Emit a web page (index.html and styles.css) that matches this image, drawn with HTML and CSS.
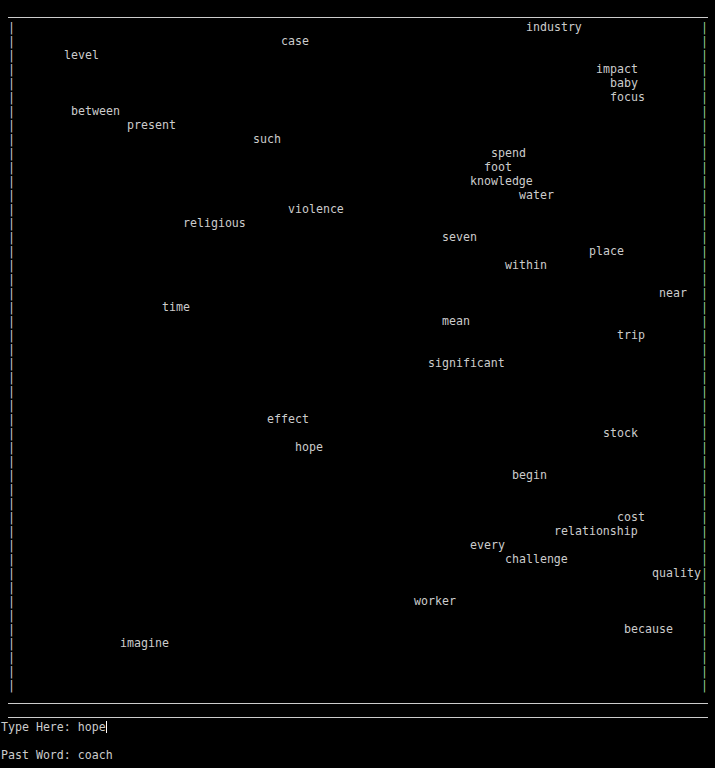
FILE: index.html
```html
<!DOCTYPE html>
<html lang="en">
<head>
<meta charset="utf-8">
<title>Typing game</title>
<link rel="stylesheet" href="styles.css">
</head>
<body>
<div class="screen">
  <div class="rule"></div>
  <div class="field">
    <div class="row"><span class="bar-l">|</span><span class="cell" style="--col:73">industry</span><span class="bar-r">|</span></div>
    <div class="row"><span class="bar-l">|</span><span class="cell" style="--col:38">case</span><span class="bar-r">|</span></div>
    <div class="row"><span class="bar-l">|</span><span class="cell" style="--col:7">level</span><span class="bar-r">|</span></div>
    <div class="row"><span class="bar-l">|</span><span class="cell" style="--col:83">impact</span><span class="bar-r">|</span></div>
    <div class="row"><span class="bar-l">|</span><span class="cell" style="--col:85">baby</span><span class="bar-r">|</span></div>
    <div class="row"><span class="bar-l">|</span><span class="cell" style="--col:85">focus</span><span class="bar-r">|</span></div>
    <div class="row"><span class="bar-l">|</span><span class="cell" style="--col:8">between</span><span class="bar-r">|</span></div>
    <div class="row"><span class="bar-l">|</span><span class="cell" style="--col:16">present</span><span class="bar-r">|</span></div>
    <div class="row"><span class="bar-l">|</span><span class="cell" style="--col:34">such</span><span class="bar-r">|</span></div>
    <div class="row"><span class="bar-l">|</span><span class="cell" style="--col:68">spend</span><span class="bar-r">|</span></div>
    <div class="row"><span class="bar-l">|</span><span class="cell" style="--col:67">foot</span><span class="bar-r">|</span></div>
    <div class="row"><span class="bar-l">|</span><span class="cell" style="--col:65">knowledge</span><span class="bar-r">|</span></div>
    <div class="row"><span class="bar-l">|</span><span class="cell" style="--col:72">water</span><span class="bar-r">|</span></div>
    <div class="row"><span class="bar-l">|</span><span class="cell" style="--col:39">violence</span><span class="bar-r">|</span></div>
    <div class="row"><span class="bar-l">|</span><span class="cell" style="--col:24">religious</span><span class="bar-r">|</span></div>
    <div class="row"><span class="bar-l">|</span><span class="cell" style="--col:61">seven</span><span class="bar-r">|</span></div>
    <div class="row"><span class="bar-l">|</span><span class="cell" style="--col:82">place</span><span class="bar-r">|</span></div>
    <div class="row"><span class="bar-l">|</span><span class="cell" style="--col:70">within</span><span class="bar-r">|</span></div>
    <div class="row"><span class="bar-l">|</span><span class="cell"></span><span class="bar-r">|</span></div>
    <div class="row"><span class="bar-l">|</span><span class="cell" style="--col:92">near</span><span class="bar-r">|</span></div>
    <div class="row"><span class="bar-l">|</span><span class="cell" style="--col:21">time</span><span class="bar-r">|</span></div>
    <div class="row"><span class="bar-l">|</span><span class="cell" style="--col:61">mean</span><span class="bar-r">|</span></div>
    <div class="row"><span class="bar-l">|</span><span class="cell" style="--col:86">trip</span><span class="bar-r">|</span></div>
    <div class="row"><span class="bar-l">|</span><span class="cell"></span><span class="bar-r">|</span></div>
    <div class="row"><span class="bar-l">|</span><span class="cell" style="--col:59">significant</span><span class="bar-r">|</span></div>
    <div class="row"><span class="bar-l">|</span><span class="cell"></span><span class="bar-r">|</span></div>
    <div class="row"><span class="bar-l">|</span><span class="cell"></span><span class="bar-r">|</span></div>
    <div class="row"><span class="bar-l">|</span><span class="cell"></span><span class="bar-r">|</span></div>
    <div class="row"><span class="bar-l">|</span><span class="cell" style="--col:36">effect</span><span class="bar-r">|</span></div>
    <div class="row"><span class="bar-l">|</span><span class="cell" style="--col:84">stock</span><span class="bar-r">|</span></div>
    <div class="row"><span class="bar-l">|</span><span class="cell" style="--col:40">hope</span><span class="bar-r">|</span></div>
    <div class="row"><span class="bar-l">|</span><span class="cell"></span><span class="bar-r">|</span></div>
    <div class="row"><span class="bar-l">|</span><span class="cell" style="--col:71">begin</span><span class="bar-r">|</span></div>
    <div class="row"><span class="bar-l">|</span><span class="cell"></span><span class="bar-r">|</span></div>
    <div class="row"><span class="bar-l">|</span><span class="cell"></span><span class="bar-r">|</span></div>
    <div class="row"><span class="bar-l">|</span><span class="cell" style="--col:86">cost</span><span class="bar-r">|</span></div>
    <div class="row"><span class="bar-l">|</span><span class="cell" style="--col:77">relationship</span><span class="bar-r">|</span></div>
    <div class="row"><span class="bar-l">|</span><span class="cell" style="--col:65">every</span><span class="bar-r">|</span></div>
    <div class="row"><span class="bar-l">|</span><span class="cell" style="--col:70">challenge</span><span class="bar-r">|</span></div>
    <div class="row"><span class="bar-l">|</span><span class="cell" style="--col:91">quality</span><span class="bar-r">|</span></div>
    <div class="row"><span class="bar-l">|</span><span class="cell"></span><span class="bar-r">|</span></div>
    <div class="row"><span class="bar-l">|</span><span class="cell" style="--col:57">worker</span><span class="bar-r">|</span></div>
    <div class="row"><span class="bar-l">|</span><span class="cell"></span><span class="bar-r">|</span></div>
    <div class="row"><span class="bar-l">|</span><span class="cell" style="--col:87">because</span><span class="bar-r">|</span></div>
    <div class="row"><span class="bar-l">|</span><span class="cell" style="--col:15">imagine</span><span class="bar-r">|</span></div>
    <div class="row"><span class="bar-l">|</span><span class="cell"></span><span class="bar-r">|</span></div>
    <div class="row"><span class="bar-l">|</span><span class="cell"></span><span class="bar-r">|</span></div>
    <div class="row"><span class="bar-l">|</span><span class="cell"></span><span class="bar-r">|</span></div>
  </div>
  <div class="rule"></div>
  <div class="rule"></div>
  <div class="line">Type Here: hope<span class="cursor"></span></div>
  <div class="line"></div>
  <div class="line">Past Word: coach</div>
</div>
</body>
</html>
```
FILE: styles.css
```css
html, body {
  margin: 0;
  padding: 0;
  background: #000000;
}

.screen {
  padding: 6px 0 0 1px;
  font-family: "DejaVu Sans Mono", "Liberation Mono", monospace;
  font-size: 11.6px;
  line-height: 14px;
  color: #cccccc;
}

.rule {
  margin-left: 7px;
  width: 700px;
  height: 11px;
  border-bottom: 1px solid #cccccc;
  margin-bottom: 2px;
}

.field {
  display: flex;
  flex-direction: column;
}

.row {
  display: flex;
  height: 14px;
}

.bar-l,
.bar-r {
  width: 7px;
  text-align: center;
  flex: none;
}

.bar-l {
  margin-left: 7px;
  color: #c8c8d8;
}

.bar-r {
  color: #8fd08f;
}

.cell {
  width: 686px;
  flex: none;
  box-sizing: border-box;
  padding-left: calc(var(--col, 0) * 7px);
  white-space: pre;
}

.line {
  height: 14px;
  white-space: pre;
  display: flex;
  align-items: center;
}

.cursor {
  display: inline-block;
  width: 1px;
  height: 12px;
  background: #ffffff;
}
```
